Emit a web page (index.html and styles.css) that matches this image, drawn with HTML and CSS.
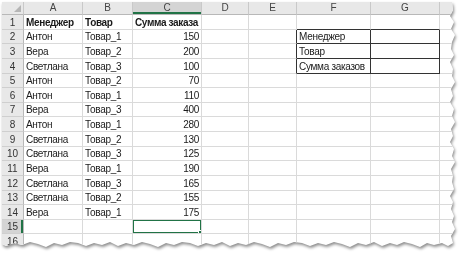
FILE: index.html
```html
<!DOCTYPE html>
<html lang="ru">
<head>
  <meta charset="UTF-8" />
  <title>Заказы</title>
  <link rel="stylesheet" href="styles.css">
</head>
<body>

  <!-- лист с рваным краем -->
  <div class="page">
    <div class="paper">
      <table class="sheet">
        <colgroup>
          <col class="c-rh"><col class="c-a"><col class="c-b"><col class="c-c"><col class="c-d">
          <col class="c-e"><col class="c-f"><col class="c-g"><col class="c-h">
        </colgroup>
        <thead>
          <tr>
            <th class="corner"></th>
            <th>A</th><th>B</th><th class="sel">C</th><th>D</th><th>E</th><th>F</th><th>G</th><th></th>
          </tr>
        </thead>
        <tbody>
          <tr><td class="rh">1</td><td class="b">Менеджер</td><td class="b">Товар</td><td class="b">Сумма заказа</td><td></td><td></td><td class="box-top"></td><td class="box-top"></td><td></td></tr>
          <tr><td class="rh">2</td><td>Антон</td><td>Товар_1</td><td class="num">150</td><td></td><td class="box-left"></td><td class="box">Менеджер</td><td class="box"></td><td></td></tr>
          <tr><td class="rh">3</td><td>Вера</td><td>Товар_2</td><td class="num">200</td><td></td><td class="box-left"></td><td class="box">Товар</td><td class="box"></td><td></td></tr>
          <tr><td class="rh">4</td><td>Светлана</td><td>Товар_3</td><td class="num">100</td><td></td><td class="box-left"></td><td class="box">Сумма заказов</td><td class="box"></td><td></td></tr>
          <tr><td class="rh">5</td><td>Антон</td><td>Товар_2</td><td class="num">70</td><td></td><td></td><td></td><td></td><td></td></tr>
          <tr><td class="rh">6</td><td>Антон</td><td>Товар_1</td><td class="num">110</td><td></td><td></td><td></td><td></td><td></td></tr>
          <tr><td class="rh">7</td><td>Вера</td><td>Товар_3</td><td class="num">400</td><td></td><td></td><td></td><td></td><td></td></tr>
          <tr><td class="rh">8</td><td>Антон</td><td>Товар_1</td><td class="num">280</td><td></td><td></td><td></td><td></td><td></td></tr>
          <tr><td class="rh">9</td><td>Светлана</td><td>Товар_2</td><td class="num">130</td><td></td><td></td><td></td><td></td><td></td></tr>
          <tr><td class="rh">10</td><td>Светлана</td><td>Товар_3</td><td class="num">125</td><td></td><td></td><td></td><td></td><td></td></tr>
          <tr><td class="rh">11</td><td>Вера</td><td>Товар_1</td><td class="num">190</td><td></td><td></td><td></td><td></td><td></td></tr>
          <tr><td class="rh">12</td><td>Светлана</td><td>Товар_3</td><td class="num">165</td><td></td><td></td><td></td><td></td><td></td></tr>
          <tr><td class="rh">13</td><td>Светлана</td><td>Товар_2</td><td class="num">155</td><td></td><td></td><td></td><td></td><td></td></tr>
          <tr><td class="rh">14</td><td>Вера</td><td>Товар_1</td><td class="num">175</td><td></td><td></td><td></td><td></td><td></td></tr>
          <tr><td class="rh sel">15</td><td></td><td></td><td class="active"><span class="cursor"></span></td><td></td><td></td><td></td><td></td><td></td></tr>
          <tr><td class="rh">16</td><td></td><td></td><td></td><td></td><td></td><td></td><td></td><td></td></tr>
        </tbody>
      </table>
    </div>
  </div>

</body>
</html>
```

FILE: styles.css
```css
body {
  margin: 0;
  background-color: #fff;
  font-family: 'Liberation Sans', Arial, sans-serif;
  font-size: 10px;
  color: #1a1a1a;
}

.page {
  padding: 2px 0 0 2px;
  filter: drop-shadow(1px 2px 1.5px rgba(0, 0, 0, 0.45));
}

/* рваный правый и нижний край */
.paper {
  width: 456px;
  height: 250px;
  overflow: hidden;
  background-color: #fff;
  clip-path: polygon(0 0, 450px 0, 451px 8px, 448px 14px, 452px 20px, 449px 27px, 453px 33px, 450px 40px,
    449px 47px, 452px 53px, 448px 60px, 451px 67px, 450px 74px, 453px 80px, 449px 87px, 451px 94px,
    448px 100px, 452px 107px, 450px 114px, 453px 120px, 449px 127px, 451px 134px, 448px 140px,
    452px 147px, 450px 154px, 453px 160px, 449px 167px, 451px 174px, 450px 180px, 452px 187px,
    448px 194px, 451px 200px, 449px 207px, 452px 214px, 450px 220px, 453px 227px, 449px 234px,
    451px 241px, 446px 244px, 440px 241px, 432px 243px, 425px 241px, 418px 245px, 410px 242px,
    402px 240px, 395px 243px, 388px 241px, 380px 244px, 372px 240px, 364px 243px, 356px 241px,
    348px 245px, 340px 242px, 332px 240px, 324px 243px, 316px 241px, 308px 244px, 300px 241px,
    292px 240px, 284px 243px, 276px 241px, 268px 245px, 260px 242px, 252px 240px, 244px 243px,
    236px 241px, 228px 244px, 220px 240px, 212px 243px, 204px 241px, 196px 244px, 188px 241px,
    180px 240px, 172px 243px, 164px 241px, 156px 245px, 148px 242px, 140px 240px, 132px 243px,
    124px 241px, 116px 244px, 108px 240px, 100px 243px, 92px 241px, 84px 244px, 76px 241px,
    68px 240px, 60px 243px, 52px 241px, 44px 245px, 36px 242px, 28px 240px, 20px 243px,
    12px 241px, 4px 244px, 0 242px);
}

.sheet {
  border-collapse: separate;
  border-spacing: 0;
  table-layout: fixed;
  width: 478px;
}

.c-rh { width: 22px; }
.c-a { width: 59px; }
.c-b { width: 50px; }
.c-c { width: 69px; }
.c-d { width: 47px; }
.c-e { width: 48px; }
.c-f { width: 74px; }
.c-g { width: 69px; }
.c-h { width: 40px; }

th,
td {
  box-sizing: border-box;
  padding: 0 2px;
  white-space: nowrap;
  overflow: hidden;
  border-right: 1px solid #dadada;
  border-bottom: 1px solid #dadada;
}

th {
  height: 13px;
  font-weight: normal;
  color: #444;
  text-align: center;
  background-color: #e8e8e8;
  border-right-color: #c9c9c9;
  border-bottom-color: #b8b8b8;
  line-height: 12px;
}

th.sel {
  background-color: #d4d4d4;
  box-shadow: inset 0 -2px 0 #217346;
}

.corner {
  position: relative;
}

.corner::after {
  content: "";
  position: absolute;
  right: 2px;
  bottom: 2px;
  border-style: solid;
  border-width: 0 0 7px 7px;
  border-color: transparent transparent #b5b5b5 transparent;
}

tbody tr {
  height: 14.64px;
}

td {
  line-height: 13px;
  vertical-align: bottom;
  letter-spacing: -0.3px;
}

.rh {
  text-align: center;
  color: #333;
  background-color: #e8e8e8;
  border-right-color: #b8b8b8;
  border-bottom-color: #cfcfcf;
  padding: 0;
  letter-spacing: 0;
}

.rh.sel {
  background-color: #d4d4d4;
  box-shadow: inset -2px 0 0 #217346;
}

.b {
  font-weight: bold;
  letter-spacing: -0.35px;
}

.num {
  text-align: right;
}

/* рамка F2:G4 */
.box {
  border-right-color: #333;
  border-bottom-color: #333;
}

.box-left {
  border-right-color: #333;
}

.box-top {
  border-bottom-color: #333;
}

.active {
  position: relative;
}

.cursor {
  position: absolute;
  left: -1px;
  top: -1px;
  right: -1px;
  bottom: -1px;
  border: 2px solid #217346;
}

.cursor::after {
  content: "";
  position: absolute;
  right: -4px;
  bottom: -4px;
  width: 4px;
  height: 4px;
  background-color: #217346;
  border: 1px solid #fff;
}
```
